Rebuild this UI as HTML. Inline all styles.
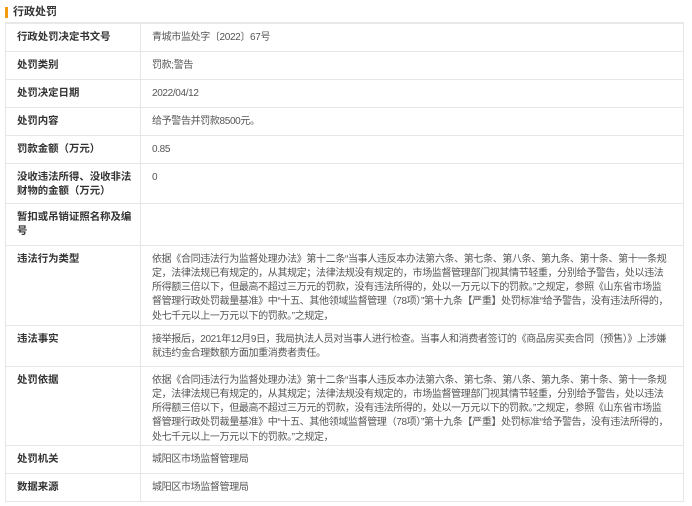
<!DOCTYPE html>
<html><head><meta charset="utf-8"><style>
body{margin:0;background:#fff;font-family:"Liberation Sans","Noto Sans CJK SC",sans-serif;}
.bar{position:absolute;left:5px;top:7px;width:3px;height:11px;background:#f39c12;}
.title{position:absolute;left:13px;top:4px;font-size:11px;font-weight:bold;color:#333;line-height:16px;}
table{position:absolute;left:5px;top:22px;width:679px;border-collapse:collapse;border-top:2px solid #e8e8e8;table-layout:fixed;}
td{border:1px solid #e6e6e6;vertical-align:top;font-size:10.4px;line-height:14.3px;padding:7px 14px 0 11px;box-sizing:border-box;overflow:hidden;}
td.l{width:135px;font-weight:bold;color:#333;padding-right:8px;}
td.v{color:#555;font-size:10px;letter-spacing:-0.35px;}
</style></head><body>
<div class="bar"></div><div class="title">行政处罚</div>
<table>
<tr style="height:28px"><td class="l">行政处罚决定书文号</td><td class="v">青城市监处字〔2022〕67号</td></tr>
<tr style="height:28px"><td class="l">处罚类别</td><td class="v">罚款;警告</td></tr>
<tr style="height:28px"><td class="l">处罚决定日期</td><td class="v">2022/04/12</td></tr>
<tr style="height:28px"><td class="l">处罚内容</td><td class="v">给予警告并罚款8500元。</td></tr>
<tr style="height:28px"><td class="l">罚款金额（万元）</td><td class="v">0.85</td></tr>
<tr style="height:40px"><td class="l">没收违法所得、没收非法财物的金额（万元）</td><td class="v">0</td></tr>
<tr style="height:42px"><td class="l">暂扣或吊销证照名称及编号</td><td class="v"></td></tr>
<tr style="height:80px"><td class="l">违法行为类型</td><td class="v">依据《合同违法行为监督处理办法》第十二条“当事人违反本办法第六条、第七条、第八条、第九条、第十条、第十一条规定，法律法规已有规定的，从其规定；法律法规没有规定的，市场监督管理部门视其情节轻重，分别给予警告，处以违法所得额三倍以下，但最高不超过三万元的罚款，没有违法所得的，处以一万元以下的罚款。”之规定，参照《山东省市场监督管理行政处罚裁量基准》中“十五、其他领域监督管理（78项）”第十九条【严重】处罚标准“给予警告，没有违法所得的，处七千元以上一万元以下的罚款。”之规定，</td></tr>
<tr style="height:41px"><td class="l">违法事实</td><td class="v">接举报后，2021年12月9日，我局执法人员对当事人进行检查。当事人和消费者签订的《商品房买卖合同（预售）》上涉嫌就违约金合理数额方面加重消费者责任。</td></tr>
<tr style="height:79px"><td class="l">处罚依据</td><td class="v">依据《合同违法行为监督处理办法》第十二条“当事人违反本办法第六条、第七条、第八条、第九条、第十条、第十一条规定，法律法规已有规定的，从其规定；法律法规没有规定的，市场监督管理部门视其情节轻重，分别给予警告，处以违法所得额三倍以下，但最高不超过三万元的罚款，没有违法所得的，处以一万元以下的罚款。”之规定，参照《山东省市场监督管理行政处罚裁量基准》中“十五、其他领域监督管理（78项）”第十九条【严重】处罚标准“给予警告，没有违法所得的，处七千元以上一万元以下的罚款。”之规定，</td></tr>
<tr style="height:28px"><td class="l">处罚机关</td><td class="v">城阳区市场监督管理局</td></tr>
<tr style="height:28px"><td class="l">数据来源</td><td class="v">城阳区市场监督管理局</td></tr>
</table>
</body></html>
